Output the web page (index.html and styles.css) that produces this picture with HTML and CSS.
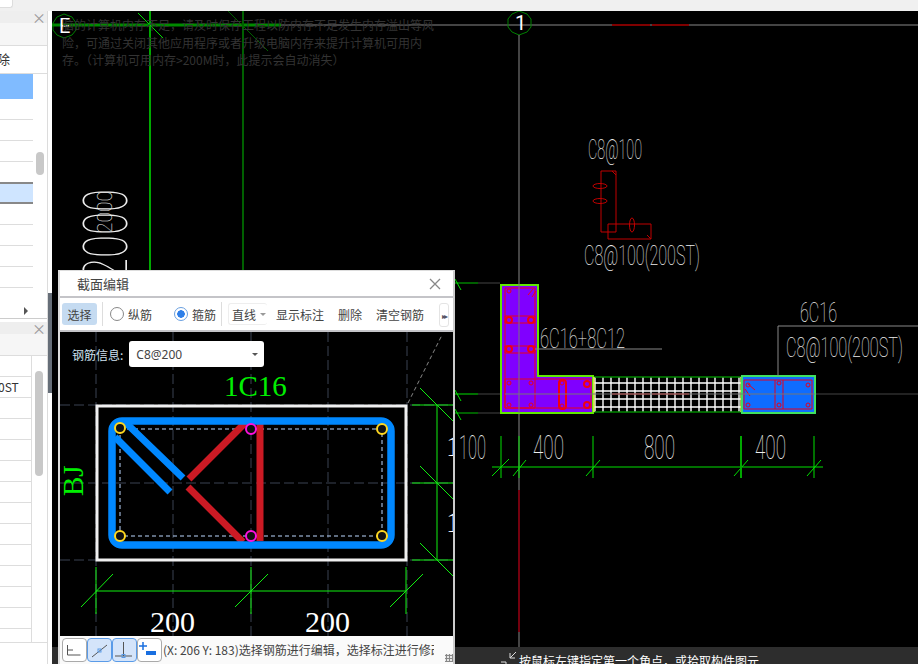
FILE: index.html
```html
<!DOCTYPE html>
<html lang="zh">
<head>
<meta charset="utf-8">
<title>截面编辑</title>
<link rel="stylesheet" href="styles.css">
</head>
<body>
<div class="top"><div class="tab"></div></div>
<div class="main">
  <aside class="left">
    <section class="pane pane-a">
      <div class="pane-head"><span class="x">×</span></div>
      <div class="pane-tools"></div>
      <div class="cmd">删除</div>
      <div class="table">
        <div class="rows">
          <div class="row sel"></div>
          <div class="row"></div><div class="row"></div><div class="row"></div><div class="row"></div>
          <div class="row cur"></div>
          <div class="row"></div><div class="row"></div><div class="row"></div><div class="row"></div>
        </div>
        <div class="track"><div class="thumb thumb-a"></div></div>
      </div>
      <div class="more"><span class="tri"></span></div>
    </section>
    <section class="pane pane-b">
      <div class="pane-head"><span class="x">×</span></div>
      <div class="pane-tools tall"></div>
      <div class="table">
        <div class="rows bordered">
          <div class="row"></div>
          <div class="row"><span class="cell">0ST</span></div>
          <div class="row"></div><div class="row"></div><div class="row"></div>
          <div class="row"></div><div class="row"></div><div class="row"></div><div class="row"></div>
          <div class="row"></div><div class="row"></div><div class="row"></div><div class="row"></div>
          <div class="row short"></div>
        </div>
        <div class="track"><div class="thumb thumb-b"></div></div>
      </div>
    </section>
  </aside>
  <div class="split"><div class="handle"></div></div>
  <main class="canvas">
    <svg class="cad" viewBox="52 11 866 653" width="866" height="653">
      <defs>
        <pattern id="mesh" x="594" y="374" width="8" height="8" patternUnits="userSpaceOnUse">
          <path d="M1 0V8M0 1H8" class="mesh-line"/>
        </pattern>
      </defs>
      <path d="M52 25H281" class="g3"/>
      <path d="M281 25H918" class="gray2"/>
      <path d="M612 25H650M652 25H689" class="dred2"/>
      <path d="M150 11V270" class="g2"/>
      <path d="M243 11V270" class="dg2"/>
      <path d="M138 13L163 38" class="g1"/>
      <path d="M228 11L268 51" class="dg1"/>
      <polygon points="64,14 72,17 76,23 76,30 72,35 64,38 57,35 53,30 53,23 57,17" class="ring"/>
      <polygon points="519,11 527,14 531,19 531,27 527,32 519,35 512,32 508,27 508,19 512,14" class="ring"/>
      <text x="59" y="33" class="cad-t bright" font-size="20">E</text>
      <text x="515" y="30" class="cad-t bright" font-size="20">1</text>
      <path d="M519 35V490" class="gray1"/>
      <path d="M519 490V632" class="red1"/>
      <path d="M519 632V647" class="gray1"/>
      <text transform="translate(127,281) rotate(-90)" class="cad-t" font-size="62" textLength="92" lengthAdjust="spacingAndGlyphs">2000</text>
      <text transform="translate(112,233) rotate(-90)" class="cad-t" font-size="20" textLength="42" lengthAdjust="spacingAndGlyphs">2000</text>

      <text x="588" y="159" class="cad-t" font-size="28" textLength="54" lengthAdjust="spacingAndGlyphs">C8@100</text>
      <text x="584" y="265" class="cad-t" font-size="28" textLength="116" lengthAdjust="spacingAndGlyphs">C8@100(200ST)</text>
      <path d="M601 171H616V232H601ZM608 224H651V239H608Z" class="dred1"/>
      <path d="M612 171L616 175M647 235L651 239" class="dred1"/>
      <ellipse cx="600" cy="186" rx="7" ry="2.5" class="dred1"/>
      <ellipse cx="600" cy="201" rx="7" ry="2.5" class="dred1"/>
      <ellipse cx="632" cy="225" rx="2.5" ry="7" class="dred1"/>

      <path d="M478 283H500M478 413H500M478 394H918" class="gray-dim"/>
      <path d="M455 283H478M455 413H478" class="dg2"/>
      <path d="M455 394H478" class="g1"/>
      <path d="M455 279L461 290M455 390L461 401M455 409L461 420" class="g1"/>

      <polygon points="501,285 538,285 538,376 593,376 593,413 501,413" class="wall"/>
      <rect x="594" y="377" width="147" height="35" class="mesh-bg"/>
      <rect x="594" y="377" width="147" height="35" fill="url(#mesh)"/>
      <path d="M594 377H741M594 412H741" class="dg1b"/>
      <path d="M594 377V412M741 377V412" class="yel"/>
      <path d="M612 394H650M652 394H689" class="red1b"/>
      <rect x="742" y="376" width="73" height="37" class="col"/>
      <path d="M505 288H535V408H505ZM505 379H591V408H505ZM505 316H535V323H505ZM505 346H535V353H505Z" class="red1"/>
      <rect x="559" y="380" width="7" height="29" rx="3" class="red1 thick"/>
      <path d="M744 380H812V409H744ZM775 380V409M783 380V409" class="red1"/>
      <path d="M748 384L755 390M745 389L750 396M528 295L533 289M532 297L536 291" class="red1"/>
      <g class="red1">
        <circle cx="509" cy="291" r="2"/><circle cx="509" cy="383" r="2"/>
        <circle cx="531" cy="383" r="2"/><circle cx="509" cy="405" r="2"/><circle cx="531" cy="405" r="2"/>
        <circle cx="562" cy="383" r="2"/>
        <circle cx="562" cy="406" r="2"/><circle cx="748" cy="385" r="2"/><circle cx="808" cy="385" r="2"/>
        <circle cx="748" cy="405" r="2"/><circle cx="808" cy="405" r="2"/><circle cx="779" cy="405" r="2"/>
        <circle cx="779" cy="383" r="2"/>
      </g>
      <g class="red1 thick">
        <circle cx="509" cy="320" r="3"/><circle cx="531" cy="320" r="3"/>
        <circle cx="509" cy="349" r="3"/><circle cx="531" cy="349" r="3"/>
        <circle cx="587" cy="384" r="3"/><circle cx="587" cy="405" r="3"/>
      </g>
      <path d="M519 284V413M505 394H815" class="gray-over"/>

      <text x="540" y="348" class="cad-t" font-size="28" textLength="85" lengthAdjust="spacingAndGlyphs">6C16+8C12</text>
      <path d="M535 349H662" class="gray1"/>
      <text x="800" y="322" class="cad-t" font-size="28" textLength="37" lengthAdjust="spacingAndGlyphs">6C16</text>
      <path d="M778 376V326H918" class="gray1"/>
      <text x="786" y="357" class="cad-t" font-size="28" textLength="117" lengthAdjust="spacingAndGlyphs">C8@100(200ST)</text>

      <path d="M492 467H823M501 436V478M519 436V478M593 436V478M741 436V478M814 436V478" class="g1"/>
      <path d="M492 476L509 459M513 476L526 460M586 476L600 460M734 476L748 460M807 476L821 460" class="g1"/>
      <path d="M741 436V478" class="g2"/>
      <text x="459" y="459" class="cad-t" font-size="33" textLength="27" lengthAdjust="spacingAndGlyphs">100</text>
      <text x="533" y="459" class="cad-t" font-size="33" textLength="31" lengthAdjust="spacingAndGlyphs">400</text>
      <text x="644" y="459" class="cad-t" font-size="33" textLength="31" lengthAdjust="spacingAndGlyphs">800</text>
      <text x="755" y="459" class="cad-t" font-size="33" textLength="31" lengthAdjust="spacingAndGlyphs">400</text>
    </svg>
    <div class="memo">脑的计算机内存不足，请及时保存工程以防内存不足发生内存溢出等风<br>险，可通过关闭其他应用程序或者升级电脑内存来提升计算机可用内<br>存。（计算机可用内存&gt;200M时，此提示会自动消失）</div>
    <div class="hint">
      <svg class="hint-icon" viewBox="0 0 18 13" width="18" height="13"><path d="M16 1L10 7M10 2V7H15M1 11H6V13" class="hint-stroke"/></svg>
      <span class="hint-text">按鼠标左键指定第一个角点，或拾取构件图元</span>
    </div>

    <div class="dialog">
      <header class="d-title"><span>截面编辑</span><span class="d-x">
        <svg viewBox="0 0 12 12" width="12" height="12"><path d="M1 1L11 11M11 1L1 11" class="x-stroke"/></svg></span></header>
      <div class="d-tools">
        <button class="tool on">选择</button>
        <span class="sep"></span>
        <label class="radio"><i class="dot"></i>纵筋</label>
        <label class="radio r2"><i class="dot checked"></i>箍筋</label>
        <span class="sep"></span>
        <span class="linetype">直线<i class="caret"></i></span>
        <span class="tool-t first">显示标注</span>
        <span class="tool-t">删除</span>
        <span class="tool-t">清空钢筋</span>
        <span class="overflow">▸▸</span>
      </div>
      <div class="d-view">
        <svg class="sec" viewBox="60 332 393 304" width="393" height="304">
          <path d="M96 332V636M173 332V636M251 332V636M328 332V636M407 332V636M60 405H453M60 483H453M60 560H453" class="axis"/>
          <path d="M408 403L442 335" class="diag-dash"/>
          <text x="224" y="396" class="serif green" font-size="29">1C16</text>
          <text transform="translate(83,496) rotate(-90)" class="serif green" font-size="29">BJ</text>
          <rect x="97" y="406" width="309" height="154" class="outer"/>
          <rect x="120" y="429" width="262" height="107" class="dash"/>
          <path d="M260 424V541" class="red"/>
          <path d="M189 479L246 422M188 487L243 542" class="red"/>
          <rect x="112" y="421" width="279" height="124" rx="10" class="blue"/>
          <path d="M125 422L183 478M115 437L170 492" class="blue-d"/>
          <g class="yellow-c"><circle cx="120" cy="428" r="5"/><circle cx="382" cy="429" r="5"/><circle cx="120" cy="536" r="5"/><circle cx="382" cy="536" r="5"/></g>
          <g class="mag-c"><circle cx="251" cy="429" r="5"/><circle cx="251" cy="536" r="5"/></g>
          <path d="M96 591H406M96 567V614M251 567V614M406 567V614M81 607L113 574M235 607L268 574M390 607L423 574" class="gl"/>
          <path d="M437 405V560M412 405H453M412 483H453M412 560H453M420 388L455 423M420 466L455 501M420 543L455 578" class="gl"/>
          <text x="150" y="632" class="serif white" font-size="30">200</text>
          <text x="305" y="632" class="serif white" font-size="30">200</text>
          <text x="446" y="456" class="serif white" font-size="30">1</text>
          <text x="446" y="532" class="serif white" font-size="30">1</text>
        </svg>
        <div class="rebar">
          <span class="rebar-l">钢筋信息:</span>
          <span class="select">C8@200<i class="caret dark"></i></span>
        </div>
      </div>
      <footer class="d-status">
        <div class="snaps">
          <span class="snap"><svg viewBox="0 0 24 22" width="24" height="22"><path d="M4.500 6V16H17.500M4.500 11H10" class="ico"/></svg></span>
          <span class="snap act"><svg viewBox="0 0 24 22" width="24" height="22"><path d="M4 18L19 6" class="ico"/><rect x="10" y="10" width="3" height="3" class="ico-b"/></svg></span>
          <span class="snap act"><svg viewBox="0 0 24 22" width="24" height="22"><path d="M10.500 3V17M2 17H19" class="ico"/><rect x="9" y="15.500" width="3" height="3" class="ico-b"/></svg></span>
          <span class="snap"><svg viewBox="0 0 24 22" width="24" height="22"><path d="M5 3V11M1 7H9" class="ico-blue"/><rect x="8" y="12" width="10" height="4" class="ico-fill"/></svg></span>
        </div>
        <span class="status-t">(X: 206 Y: 183)选择钢筋进行编辑，选择标注进行修改钢筋信息</span>
        <span class="grip"></span>
      </footer>
    </div>
  </main>
</div>
</body>
</html>
```

FILE: styles.css
```css
* { box-sizing: border-box; }
html, body { margin: 0; padding: 0; }
body {
  width: 918px; height: 664px; overflow: hidden;
  font-family: "Noto Sans CJK SC", "Noto Sans", sans-serif;
  font-size: 12px; background: #fff;
  display: flex; flex-direction: column;
}
.top { height: 11px; background: #f0f0f0; flex: none; }
.tab { width: 13px; height: 8px; background: #fff; border: 1px solid #ddd; border-top: 0; border-left: 0; border-bottom-right-radius: 3px; }
.main { flex: 1; display: flex; min-height: 0; }

.left { width: 48px; flex: none; display: flex; flex-direction: column; background: #fff; border-right: 1px solid #dcdcdc; }
.pane { overflow: hidden; display: flex; flex-direction: column; }
.pane-a { height: 308px; border-bottom: 1px solid #ccc; }
.pane-b { margin-top: 3px; height: 321px; border-bottom: 1px solid #ddd; }
.pane-head { height: 12px; background: #eee; display: flex; justify-content: flex-end; align-items: center; padding-right: 1px; flex: none; }
.x { color: #999; font-size: 14px; line-height: 12px; }
.pane-tools { height: 23px; background: #f6f6f6; border-bottom: 1px solid #ddd; flex: none; }
.pane-tools.tall { height: 22px; }
.cmd { height: 28px; flex: none; margin-left: -16px; padding-top: 3px; font-size: 13px; line-height: 20px; color: #333; border-bottom: 1px solid #ddd; white-space: nowrap; }
.table { display: flex; flex: 1; min-height: 0; }
.pane-a .table { flex: none; }
.rows { width: 33px; flex: none; }
.rows.bordered { width: 32px; border-right: 1px solid #ddd; }
.row { height: 21px; border-bottom: 1px solid #ddd; overflow: hidden; }
.row.short { height: 13px; border-bottom: 0; }
.row.sel { height: 25px; background: #80bbff; border-bottom: 0; }
.row.cur { height: 22px; margin-top: -1px; background: #cfe5ff; border-top: 2px solid #888; border-bottom: 2px solid #888; }
.cell { display: block; line-height: 20px; color: #333; margin-left: -2px; }
.track { flex: 1; position: relative; }
.thumb { width: 8px; background: #c8c8c8; border-radius: 4px; margin-left: 3px; }
.thumb-a { height: 23px; margin-top: 78px; }
.thumb-b { height: 105px; margin-top: 15px; }
.more { flex: 1; display: flex; justify-content: flex-end; align-items: flex-end; padding: 0 19px 3px 0; }
.tri { width: 0; height: 0; border-left: 4px solid #555; border-top: 4px solid transparent; border-bottom: 4px solid transparent; }

.split { width: 4px; flex: none; background: #fff; padding-top: 282px; }
.handle { height: 100px; background: #666e78; }

.canvas { flex: 1; position: relative; background: #000; overflow: hidden; }
.cad { display: block; }
.memo { position: absolute; left: 10px; top: 5px; width: 380px; color: #333; font-size: 12px; line-height: 17.500px; white-space: nowrap; }
.hint { position: absolute; left: 0; right: 0; bottom: 0; height: 17px; background: #2d2d2d; display: flex; align-items: flex-start; padding-left: 447px; overflow: hidden; }
.hint-icon { flex: none; margin-top: 4px; margin-left: 1px; }
.hint-stroke { fill: none; stroke: #ddd; stroke-width: 1; }
.hint-text { color: #fff; font-size: 12px; line-height: 17px; margin-left: 1px; margin-top: 5px; white-space: nowrap; }

.cad-t { font-family: Roboto, "Liberation Sans", sans-serif; font-weight: 100; fill: #eee; }
.bright { fill: #fff; font-weight: 400; }
.g3, .g2, .g1, .dg2, .dg1, .dg1b, .gray1, .gray2, .red1, .red1b, .dred1, .dred2, .yel, .gray-dim, .gray-over { fill: none; }
.g3 { stroke: #008a00; stroke-width: 3; }
.g2 { stroke: #00a800; stroke-width: 2; }
.g1 { stroke: #00e000; stroke-width: 1; }
.dg2 { stroke: #006000; stroke-width: 2; }
.dg1 { stroke: #006000; stroke-width: 1; }
.dg1b { stroke: #008800; stroke-width: 1.500; }
.gray1 { stroke: #888; stroke-width: 1; }
.gray2 { stroke: #444; stroke-width: 2; }
.gray-dim { stroke: #444; stroke-width: 1; }
.gray-over { stroke: #777; stroke-width: 1; }
.red1 { stroke: #e8001c; stroke-width: 1; fill: none; }
.red1.thick { stroke-width: 2; stroke: #f00010; }
.red1 circle { fill: none; }
.red1b { stroke: #ff2020; stroke-width: 1; }
.dred1 { stroke: #c00000; stroke-width: 1; }
.dred2 { stroke: #800000; stroke-width: 2; }
.yel { stroke: #e8e860; stroke-width: 1.500; }
.ring { fill: none; stroke: #008000; stroke-width: 1; }
.wall { fill: #8000ff; stroke: #60e800; stroke-width: 2; }
.col { fill: #0f6cff; stroke: #40e060; stroke-width: 2; }
.mesh-bg { fill: #000; }
.mesh-line { fill: none; stroke: #fff; stroke-width: 1.400; }

.dialog {
  position: absolute; left: 6px; top: 259px; width: 397px; height: 394px;
  background: #fff; display: flex; flex-direction: column;
  border-right: 2px solid #ccc; border-top: 1px solid #ddd; border-left: 2px solid #ddd;
}
.d-title { height: 27px; flex: none; display: flex; justify-content: space-between; align-items: center; padding: 0 12px 0 17px; font-size: 13px; color: #444; border-bottom: 2px solid #c4c4c8; }
.d-x { display: flex; }
.x-stroke { fill: none; stroke: #888; stroke-width: 1.300; }
.d-tools { height: 34px; flex: none; display: flex; align-items: center; padding-left: 2px; border-bottom: 2px solid #c4c4c8; color: #444; font-size: 12px; position: relative; }
.tool { width: 35px; height: 22px; border: 0; border-radius: 3px; background: #c5dbf1; color: #444; font: inherit; padding: 0; }
.sep { width: 1px; height: 24px; background: #ddd; margin-left: 5px; }
.radio { display: flex; align-items: center; gap: 4px; margin-left: 7px; width: 44px; }
.radio.r2 { margin-left: 20px; width: 42px; }
.dot { width: 14px; height: 14px; border: 1px solid #888; border-radius: 50%; background: #fff; flex: none; display: block; }
.dot.checked { border-color: #6aa0e0; background: radial-gradient(circle, #2e7fe8 0 3.500px, #fff 4px); }
.linetype { margin-left: 6px; width: 39px; height: 22px; padding-left: 3px; display: flex; align-items: center; gap: 4px; border: 1px solid #eee; border-right: 0; border-radius: 3px; white-space: nowrap; }
.caret { display: block; width: 0; height: 0; border-top: 3px solid #999; border-left: 3px solid transparent; border-right: 3px solid transparent; }
.caret.dark { border-top-color: #555; }
.tool-t { margin-left: 14px; white-space: nowrap; }
.tool-t.first { margin-left: 9px; }
.overflow { position: absolute; left: 379px; top: 5px; width: 10px; height: 24px; border: 1px solid #e4e4e4; border-radius: 3px; font-size: 8px; letter-spacing: -2px; color: #556; display: flex; align-items: center; justify-content: center; overflow: hidden; }
.d-view { height: 304px; flex: none; background: #000; position: relative; overflow: hidden; }
.sec { display: block; }
.axis { fill: none; stroke: #3a4252; stroke-width: 1; stroke-dasharray: 10 4; }
.diag-dash { fill: none; stroke: #888; stroke-width: 1; stroke-dasharray: 4 3; }
.serif { font-family: "Liberation Serif", serif; }
.green { fill: #00f000; }
.white { fill: #fff; }
.outer { fill: none; stroke: #f0f0f0; stroke-width: 3; }
.dash { fill: none; stroke: #bcd8ff; stroke-width: 1; stroke-dasharray: 4 3; }
.red { fill: none; stroke: #cc1a24; stroke-width: 7; }
.blue { fill: none; stroke: #0088ff; stroke-width: 7.500; }
.blue-d { fill: none; stroke: #0088ff; stroke-width: 7; }
.yellow-c circle { fill: #111; stroke: #ffd820; stroke-width: 2; }
.mag-c circle { fill: #111; stroke: #ff10e0; stroke-width: 2; }
.gl { fill: none; stroke: #10f010; stroke-width: 1; }
.rebar { position: absolute; left: 12px; top: 9px; display: flex; align-items: center; gap: 6px; }
.rebar-l { color: #cfe0f0; font-size: 12px; }
.select { width: 135px; height: 26px; background: #fff; border-radius: 3px; color: #444; font-family: "Noto Sans", sans-serif; font-size: 12px; padding: 0 6px 0 7px; display: flex; align-items: center; justify-content: space-between; }
.d-status { flex: 1; min-height: 0; background: #fafafa; display: flex; align-items: flex-start; padding: 2px 0 0 2px; position: relative; overflow: hidden; }
.snaps { display: flex; flex: none; }
.snap { width: 25px; height: 24px; border: 1px solid #aaa; border-radius: 4px; background: #fff; display: block; }
.snap svg { display: block; }
.snap.act { background: #d4e4fa; border-color: #5a9be8; }
.ico { fill: none; stroke: #555; stroke-width: 1; }
.ico-b { fill: none; stroke: #5a9be8; stroke-width: 1; }
.ico-blue { fill: none; stroke: #1a6fe0; stroke-width: 1.500; }
.ico-fill { fill: #1a6fe0; }
.status-t { width: 271px; margin-left: 1px; overflow: hidden; white-space: nowrap; color: #444; font-size: 12px; line-height: 24px; flex: none; }
.grip { width: 8px; height: 8px; margin-left: 11px; margin-top: 16px; background: radial-gradient(circle, #888 0 1px, transparent 1.500px) 0 0 / 3px 3px; flex: none; }
```
